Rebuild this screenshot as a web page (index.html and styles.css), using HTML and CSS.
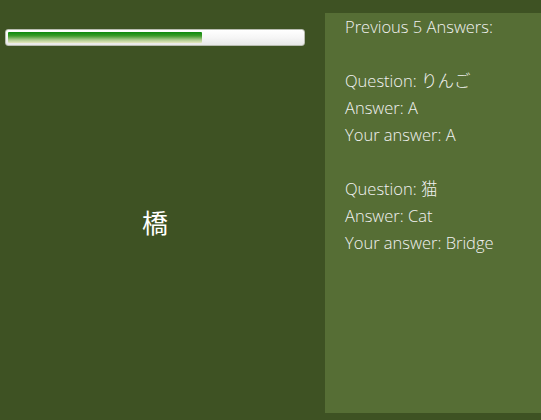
FILE: index.html
```html
<!DOCTYPE html>
<html>
<head>
<meta charset="utf-8">
<link rel="stylesheet" href="styles.css">
</head>
<body>
<div class="app">
  <div class="left">
    <div class="progress"><div class="fill" style="width:194px"></div></div>
    <div class="stage"><span class="kanji">橋</span></div>
  </div>
  <div class="panel">
    <div class="line">Previous 5 Answers:</div>
    <div class="line">&nbsp;</div>
    <div class="line">Question: りんご</div>
    <div class="line">Answer: A</div>
    <div class="line">Your answer: A</div>
    <div class="line">&nbsp;</div>
    <div class="line">Question: 猫</div>
    <div class="line">Answer: Cat</div>
    <div class="line">Your answer: Bridge</div>
  </div>
</div>
</body>
</html>
```
FILE: styles.css
```css
html, body {
  margin: 0;
  padding: 0;
  width: 541px;
  height: 420px;
  overflow: hidden;
  background: #3e5223;
}
.app {
  display: flex;
  height: 420px;
  font-family: "Open Sans", "Noto Sans CJK JP", sans-serif;
  color: #f2f2f2;
}
.left {
  width: 325px;
  display: flex;
  flex-direction: column;
}
.progress {
  margin: 29px 0 0 5px;
  width: 294px;
  height: 11px;
  border: 1px solid #b8bcb0;
  border-radius: 3px;
  background: linear-gradient(#ffffff, #f6f6f6 50%, #e8e8e8);
  padding: 2px;
  box-sizing: content-box;
  display: flex;
}
.fill {
  height: 11px;
  background: linear-gradient(#0b8a0b, #3c9a2a 35%, #a9c98a 70%, #e6e8c0);
  border-radius: 1px;
}
.stage {
  width: 310px;
  flex: 1;
  display: flex;
  align-items: center;
  justify-content: center;
  padding-bottom: 24px;
}
.kanji {
  font-family: "Noto Sans CJK JP", sans-serif;
  font-size: 26px;
  font-weight: 400;
  color: #ffffff;
}
.panel {
  margin-top: 13px;
  width: 216px;
  height: 400px;
  background: #566e35;
  box-sizing: border-box;
  padding: 0 0 0 20px;
  font-weight: 300;
  font-size: 16.5px;
}
.line {
  height: 27px;
  line-height: 27px;
  white-space: nowrap;
}
```
